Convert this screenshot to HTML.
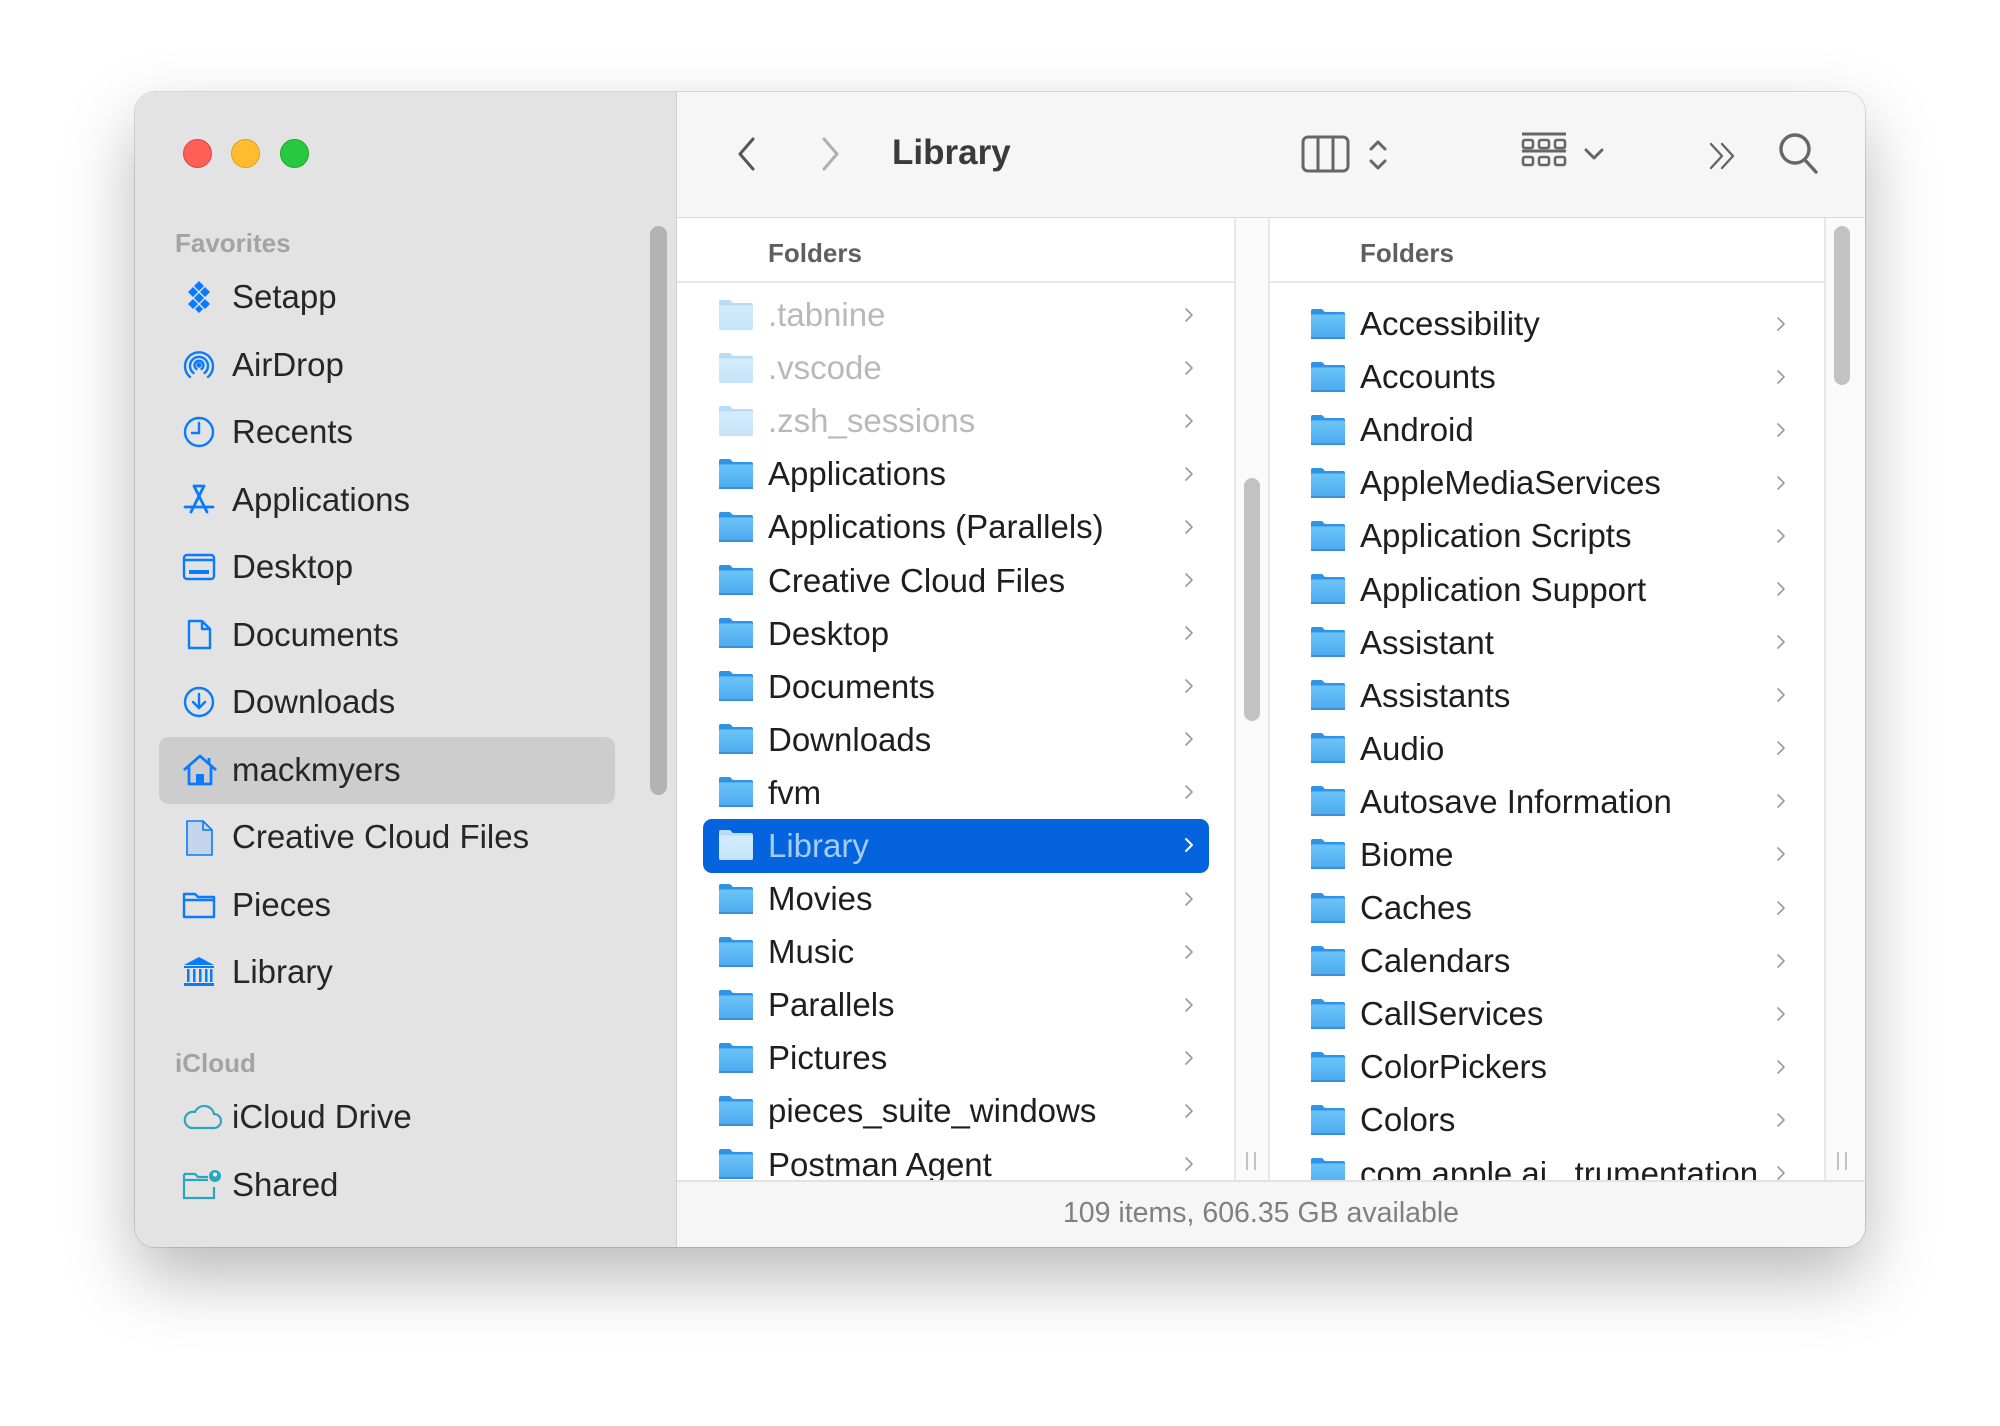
<!DOCTYPE html>
<html><head><meta charset="utf-8"><style>
*{margin:0;padding:0;box-sizing:border-box}
html,body{width:2000px;height:1426px;background:#fff;overflow:hidden;font-family:"Liberation Sans",sans-serif}
.win{position:absolute;left:135px;top:92px;width:1730px;height:1155px;border-radius:20px;overflow:hidden;background:#fff;box-shadow:0 30px 70px rgba(0,0,0,.28),0 0 0 1px rgba(0,0,0,.12)}
.side{position:absolute;left:0;top:0;width:542px;height:1155px;background:#e3e3e3;border-right:1px solid #d0d0d0}
.light{position:absolute;top:47px;width:29px;height:29px;border-radius:50%}
.sec{position:absolute;left:40px;font-size:26px;font-weight:bold;color:#a3a3a3}
.si{position:absolute;left:0;width:542px;height:68px;display:flex;align-items:center;font-size:33px;color:#262626}
.si svg{position:absolute;left:47px;top:17px}
.si span{position:absolute;left:97px}
.sel{position:absolute;left:24px;top:645px;width:456px;height:67px;background:#cdcdcd;border-radius:10px}
.sbar{position:absolute;left:515px;top:134px;width:17px;height:569px;border-radius:9px;background:#b3b3b3}
.tb{position:absolute;left:542px;top:0;width:1188px;height:126px;background:#f6f6f6;border-bottom:1px solid #dcdcdc}
.title{position:absolute;left:215px;top:41px;font-size:35px;font-weight:bold;color:#3a3a3a}
.col{position:absolute;top:126px;height:963px;overflow:hidden;background:#fff}
.hdr{height:65px;border-bottom:2px solid #e6e6e6;font-size:26px;font-weight:bold;color:#5f5f5f;padding-top:20px}
.row{height:53.1px;position:relative;display:flex;align-items:center;font-size:33px;color:#1e1e1e;white-space:nowrap}
.row svg.f{position:absolute;top:10px}
.row .ch{position:absolute;top:18px}
.fade{color:#b9b9b9}
.gap{position:absolute;top:126px;height:963px;background:#fafafa;border-left:2px solid #e8e8e8;border-right:2px solid #e8e8e8}
.thumb{position:absolute;width:16px;border-radius:8px;background:#c2c2c2}
.status{position:absolute;left:542px;top:1088px;width:1188px;height:67px;background:#f6f6f6;border-top:2px solid #e2e2e2;text-align:center;font-size:28.5px;color:#808080;padding-top:15px;padding-right:20px}
.grip{position:absolute;width:10px;height:18px;border-left:2px solid #c2c2c2;border-right:2px solid #c2c2c2}
</style></head><body>
<svg width="0" height="0" style="position:absolute">
<defs>
<linearGradient id="fg" x1="0" y1="0" x2="0" y2="1"><stop offset="0" stop-color="#6cc4f8"/><stop offset="1" stop-color="#4aa9ef"/></linearGradient>
<linearGradient id="fgl" x1="0" y1="0" x2="0" y2="1"><stop offset="0" stop-color="#d4ecfc"/><stop offset="1" stop-color="#c4e3fa"/></linearGradient>
<symbol id="fold" viewBox="0 0 36 32"><path d="M1 3q0-2 2-2h9l3 3h18q2 0 2 2v23q0 2-2 2H3q-2 0-2-2z" fill="#2f93e6"/><path d="M1 8q0-1.5 1.5-1.5h31q1.5 0 1.5 1.5v21q0 2-2 2H3q-2 0-2-2z" fill="url(#fg)"/><rect x="1" y="29" width="34" height="2" fill="#3a8fd6"/></symbol>
<symbol id="foldl" viewBox="0 0 36 32"><path d="M1 3q0-2 2-2h9l3 3h18q2 0 2 2v23q0 2-2 2H3q-2 0-2-2z" fill="#b8dcf7"/><path d="M1 8q0-1.5 1.5-1.5h31q1.5 0 1.5 1.5v21q0 2-2 2H3q-2 0-2-2z" fill="url(#fgl)"/></symbol>
<symbol id="chev" viewBox="0 0 10 16"><path d="M2 2l6 6-6 6" fill="none" stroke="#9a9a9a" stroke-width="1.6" stroke-linecap="round" stroke-linejoin="round"/></symbol>
<symbol id="chevw" viewBox="0 0 10 16"><path d="M2 2l6 6-6 6" fill="none" stroke="#fff" stroke-width="2" stroke-linecap="round" stroke-linejoin="round"/></symbol>
</defs></svg>
<div class="win">
 <div class="side">
  <div class="light" style="left:48px;background:#fe5f57;border:1px solid #e0443e"></div>
  <div class="light" style="left:96px;background:#febc2e;border:1px solid #dea123"></div>
  <div class="light" style="left:145px;background:#28c840;border:1px solid #1aab29"></div>
  <div class="sec" style="top:136px">Favorites</div>
  <div class="sel"></div>
  <div class="si" style="top:171px"><svg width="34" height="34" viewBox="0 0 34 34" fill="#0a7aff"><path d="M17 1l5 5-5 5-5-5z M11 7l5 5-5 5-5-5z M23 7l5 5-5 5-5-5z M17 13l5 5-5 5-5-5z M11 19l5 5-5 5-5-5z M23 19l5 5-5 5-5-5z M17 25l4 4-4 4-4-4z"/></svg><span>Setapp</span></div>
  <div class="si" style="top:239px"><svg width="34" height="34" viewBox="0 0 34 34" fill="none" stroke="#0a7aff" stroke-width="2.4" stroke-linecap="round"><path d="M8 29A14 14 0 1 1 26 29"/><path d="M11.5 25A9 9 0 1 1 22.5 25"/><path d="M14.5 21A4.5 4.5 0 1 1 19.5 21"/><circle cx="17" cy="17" r="1.5" fill="#0a7aff"/></svg><span>AirDrop</span></div>
  <div class="si" style="top:306px"><svg width="34" height="34" viewBox="0 0 34 34" fill="none" stroke="#0a7aff" stroke-width="2.4" stroke-linecap="round"><circle cx="17" cy="17" r="14"/><path d="M17 8v10h-7"/></svg><span>Recents</span></div>
  <div class="si" style="top:374px"><svg width="34" height="34" viewBox="0 0 34 34" fill="none" stroke="#0a7aff" stroke-width="2.8" stroke-linecap="round"><path d="M12 3l13 26M22 3L9 29M3 24h28M12 3h8"/></svg><span>Applications</span></div>
  <div class="si" style="top:441px"><svg width="34" height="34" viewBox="0 0 34 34" fill="none" stroke="#0a7aff" stroke-width="2.4"><rect x="2" y="5" width="30" height="24" rx="3"/><path d="M2 10h30"/><rect x="7" y="20" width="20" height="4" fill="#0a7aff" stroke="none"/></svg><span>Desktop</span></div>
  <div class="si" style="top:509px"><svg width="34" height="34" viewBox="0 0 34 34" fill="none" stroke="#0a7aff" stroke-width="2.4" stroke-linejoin="round"><path d="M7 3h13l8 8v19H7z M20 3v8h8"/></svg><span>Documents</span></div>
  <div class="si" style="top:576px"><svg width="34" height="34" viewBox="0 0 34 34" fill="none" stroke="#0a7aff" stroke-width="2.4" stroke-linecap="round"><circle cx="17" cy="17" r="14"/><path d="M17 9v14M11 17l6 6 6-6"/></svg><span>Downloads</span></div>
  <div class="si" style="top:644px"><svg width="36" height="34" viewBox="0 0 36 34" fill="none" stroke="#0a7aff" stroke-width="2.8" stroke-linejoin="round"><path d="M2 17L18 3l16 14M7 13v18h22V13"/><rect x="14" y="21" width="8" height="10" fill="#0a7aff" stroke="none"/><path d="M27 5v6"/></svg><span>mackmyers</span></div>
  <div class="si" style="top:711px"><svg width="34" height="36" viewBox="0 0 34 36" fill="#c5d6ec" stroke="#0a7aff" stroke-width="1.6" stroke-linejoin="round"><path d="M5 1h16l9 9v25H5z"/><path d="M21 1v9h9" fill="none"/></svg><span>Creative Cloud Files</span></div>
  <div class="si" style="top:779px"><svg width="34" height="34" viewBox="0 0 34 34" fill="none" stroke="#0a7aff" stroke-width="2.4" stroke-linejoin="round"><path d="M2 6h11l3 3h16v20H2z M2 12h30"/></svg><span>Pieces</span></div>
  <div class="si" style="top:846px"><svg width="34" height="34" viewBox="0 0 34 34" fill="#0a7aff"><path d="M17 2L2 10h30z"/><rect x="2" y="11" width="30" height="2"/><rect x="5" y="14" width="2.5" height="13"/><rect x="11" y="14" width="2.5" height="13"/><rect x="17" y="14" width="2.5" height="13"/><rect x="23" y="14" width="2.5" height="13"/><rect x="28" y="14" width="2.5" height="13"/><rect x="2" y="28" width="30" height="3"/></svg><span>Library</span></div>
  <div class="sec" style="top:956px">iCloud</div>
  <div class="si" style="top:991px"><svg width="40" height="34" viewBox="0 0 40 34" fill="none" stroke="#2aa6bf" stroke-width="2.2"><path d="M9 28h23a7 7 0 0 0 0-14 10 10 0 0 0-19-2 7 7 0 0 0-4 16z"/></svg><span>iCloud Drive</span></div>
  <div class="si" style="top:1059px"><svg width="40" height="34" viewBox="0 0 40 34" fill="none" stroke="#2aa6bf" stroke-width="2.2"><path d="M2 6h11l3 3h10M2 12h24M2 6v24h30V19"/><circle cx="33" cy="8" r="6" fill="#2aa6bf" stroke="none"/><circle cx="33" cy="6.5" r="2" fill="#fff" stroke="none"/></svg><span>Shared</span></div>
  <div class="sbar"></div>
 </div>
 <div class="tb">
  <svg style="position:absolute;left:58px;top:44px" width="22" height="36" viewBox="0 0 22 36"><path d="M18 3L5 18l13 15" fill="none" stroke="#555" stroke-width="3" stroke-linecap="round" stroke-linejoin="round"/></svg>
  <svg style="position:absolute;left:143px;top:44px" width="22" height="36" viewBox="0 0 22 36"><path d="M4 3l13 15L4 33" fill="none" stroke="#b0b0b0" stroke-width="3" stroke-linecap="round" stroke-linejoin="round"/></svg>
  <div class="title">Library</div>
  <svg style="position:absolute;left:624px;top:42px" width="50" height="40" viewBox="0 0 50 40" fill="none" stroke="#666" stroke-width="3"><rect x="2" y="3" width="45" height="34" rx="5"/><path d="M17 3v34M32 3v34"/></svg>
  <svg style="position:absolute;left:690px;top:46px" width="22" height="34" viewBox="0 0 22 34" fill="none" stroke="#666" stroke-width="3" stroke-linecap="round" stroke-linejoin="round"><path d="M4 11l7-7 7 7M4 23l7 7 7-7"/></svg>
  <svg style="position:absolute;left:844px;top:40px" width="46" height="44" viewBox="0 0 46 44" fill="none" stroke="#666" stroke-width="2.6"><path d="M1 2h44M1 19h44" stroke-width="3"/><rect x="2" y="8" width="10" height="8" rx="2"/><rect x="18" y="8" width="10" height="8" rx="2"/><rect x="34" y="8" width="10" height="8" rx="2"/><rect x="2" y="25" width="10" height="8" rx="2"/><rect x="18" y="25" width="10" height="8" rx="2"/><rect x="34" y="25" width="10" height="8" rx="2"/></svg>
  <svg style="position:absolute;left:906px;top:55px" width="22" height="16" viewBox="0 0 22 16"><path d="M3 3l8 8 8-8" fill="none" stroke="#666" stroke-width="3" stroke-linecap="round" stroke-linejoin="round"/></svg>
  <svg style="position:absolute;left:1031px;top:49px" width="32" height="30" viewBox="0 0 32 30" fill="none" stroke="#666" stroke-width="2.4" stroke-linecap="round" stroke-linejoin="round"><path d="M3 3l11 12L3 27M14 3l11 12-11 12"/></svg>
  <svg style="position:absolute;left:1101px;top:40px" width="44" height="44" viewBox="0 0 44 44" fill="none" stroke="#666" stroke-width="3.4" stroke-linecap="round"><circle cx="17" cy="17" r="14"/><path d="M27 28l11 12"/></svg>
 </div>
 <!-- column 1 -->
 <div class="col" style="left:542px;width:557px">
  <div class="hdr" style="padding-left:91px">Folders</div>
  <div style="padding-top:5.5px">
   <div class="row fade"><svg class="f" style="left:41px" width="36" height="32"><use href="#foldl"/></svg><span style="margin-left:91px">.tabnine</span><svg class="ch" style="left:507px" width="10" height="16"><use href="#chev"/></svg></div>
   <div class="row fade"><svg class="f" style="left:41px" width="36" height="32"><use href="#foldl"/></svg><span style="margin-left:91px">.vscode</span><svg class="ch" style="left:507px" width="10" height="16"><use href="#chev"/></svg></div>
   <div class="row fade"><svg class="f" style="left:41px" width="36" height="32"><use href="#foldl"/></svg><span style="margin-left:91px">.zsh_sessions</span><svg class="ch" style="left:507px" width="10" height="16"><use href="#chev"/></svg></div>
   <div class="row"><svg class="f" style="left:41px" width="36" height="32"><use href="#fold"/></svg><span style="margin-left:91px">Applications</span><svg class="ch" style="left:507px" width="10" height="16"><use href="#chev"/></svg></div>
   <div class="row"><svg class="f" style="left:41px" width="36" height="32"><use href="#fold"/></svg><span style="margin-left:91px">Applications (Parallels)</span><svg class="ch" style="left:507px" width="10" height="16"><use href="#chev"/></svg></div>
   <div class="row"><svg class="f" style="left:41px" width="36" height="32"><use href="#fold"/></svg><span style="margin-left:91px">Creative Cloud Files</span><svg class="ch" style="left:507px" width="10" height="16"><use href="#chev"/></svg></div>
   <div class="row"><svg class="f" style="left:41px" width="36" height="32"><use href="#fold"/></svg><span style="margin-left:91px">Desktop</span><svg class="ch" style="left:507px" width="10" height="16"><use href="#chev"/></svg></div>
   <div class="row"><svg class="f" style="left:41px" width="36" height="32"><use href="#fold"/></svg><span style="margin-left:91px">Documents</span><svg class="ch" style="left:507px" width="10" height="16"><use href="#chev"/></svg></div>
   <div class="row"><svg class="f" style="left:41px" width="36" height="32"><use href="#fold"/></svg><span style="margin-left:91px">Downloads</span><svg class="ch" style="left:507px" width="10" height="16"><use href="#chev"/></svg></div>
   <div class="row"><svg class="f" style="left:41px" width="36" height="32"><use href="#fold"/></svg><span style="margin-left:91px">fvm</span><svg class="ch" style="left:507px" width="10" height="16"><use href="#chev"/></svg></div>
   <div class="row" style="color:#a4cdf5"><div style="position:absolute;left:26px;top:0;width:506px;height:54px;background:#0563dd;border-radius:9px"></div><svg class="f" style="left:41px" width="36" height="32"><use href="#foldl"/></svg><span style="margin-left:91px;position:relative">Library</span><svg class="ch" style="left:507px" width="10" height="16"><use href="#chevw"/></svg></div>
   <div class="row"><svg class="f" style="left:41px" width="36" height="32"><use href="#fold"/></svg><span style="margin-left:91px">Movies</span><svg class="ch" style="left:507px" width="10" height="16"><use href="#chev"/></svg></div>
   <div class="row"><svg class="f" style="left:41px" width="36" height="32"><use href="#fold"/></svg><span style="margin-left:91px">Music</span><svg class="ch" style="left:507px" width="10" height="16"><use href="#chev"/></svg></div>
   <div class="row"><svg class="f" style="left:41px" width="36" height="32"><use href="#fold"/></svg><span style="margin-left:91px">Parallels</span><svg class="ch" style="left:507px" width="10" height="16"><use href="#chev"/></svg></div>
   <div class="row"><svg class="f" style="left:41px" width="36" height="32"><use href="#fold"/></svg><span style="margin-left:91px">Pictures</span><svg class="ch" style="left:507px" width="10" height="16"><use href="#chev"/></svg></div>
   <div class="row"><svg class="f" style="left:41px" width="36" height="32"><use href="#fold"/></svg><span style="margin-left:91px">pieces_suite_windows</span><svg class="ch" style="left:507px" width="10" height="16"><use href="#chev"/></svg></div>
   <div class="row"><svg class="f" style="left:41px" width="36" height="32"><use href="#fold"/></svg><span style="margin-left:91px">Postman Agent</span><svg class="ch" style="left:507px" width="10" height="16"><use href="#chev"/></svg></div>
  </div>
 </div>
 <div class="gap" style="left:1099px;width:36px"></div>
 <div class="thumb" style="left:1109px;top:386px;height:243px"></div>
 <div class="grip" style="left:1111px;top:1060px"></div>
 <!-- column 2 -->
 <div class="col" style="left:1135px;width:555px">
  <div class="hdr" style="padding-left:90px">Folders</div>
  <div style="padding-top:14.5px">
   <div class="row"><svg class="f" style="left:40px" width="36" height="32"><use href="#fold"/></svg><span style="margin-left:90px">Accessibility</span><svg class="ch" style="left:506px" width="10" height="16"><use href="#chev"/></svg></div>
   <div class="row"><svg class="f" style="left:40px" width="36" height="32"><use href="#fold"/></svg><span style="margin-left:90px">Accounts</span><svg class="ch" style="left:506px" width="10" height="16"><use href="#chev"/></svg></div>
   <div class="row"><svg class="f" style="left:40px" width="36" height="32"><use href="#fold"/></svg><span style="margin-left:90px">Android</span><svg class="ch" style="left:506px" width="10" height="16"><use href="#chev"/></svg></div>
   <div class="row"><svg class="f" style="left:40px" width="36" height="32"><use href="#fold"/></svg><span style="margin-left:90px">AppleMediaServices</span><svg class="ch" style="left:506px" width="10" height="16"><use href="#chev"/></svg></div>
   <div class="row"><svg class="f" style="left:40px" width="36" height="32"><use href="#fold"/></svg><span style="margin-left:90px">Application Scripts</span><svg class="ch" style="left:506px" width="10" height="16"><use href="#chev"/></svg></div>
   <div class="row"><svg class="f" style="left:40px" width="36" height="32"><use href="#fold"/></svg><span style="margin-left:90px">Application Support</span><svg class="ch" style="left:506px" width="10" height="16"><use href="#chev"/></svg></div>
   <div class="row"><svg class="f" style="left:40px" width="36" height="32"><use href="#fold"/></svg><span style="margin-left:90px">Assistant</span><svg class="ch" style="left:506px" width="10" height="16"><use href="#chev"/></svg></div>
   <div class="row"><svg class="f" style="left:40px" width="36" height="32"><use href="#fold"/></svg><span style="margin-left:90px">Assistants</span><svg class="ch" style="left:506px" width="10" height="16"><use href="#chev"/></svg></div>
   <div class="row"><svg class="f" style="left:40px" width="36" height="32"><use href="#fold"/></svg><span style="margin-left:90px">Audio</span><svg class="ch" style="left:506px" width="10" height="16"><use href="#chev"/></svg></div>
   <div class="row"><svg class="f" style="left:40px" width="36" height="32"><use href="#fold"/></svg><span style="margin-left:90px">Autosave Information</span><svg class="ch" style="left:506px" width="10" height="16"><use href="#chev"/></svg></div>
   <div class="row"><svg class="f" style="left:40px" width="36" height="32"><use href="#fold"/></svg><span style="margin-left:90px">Biome</span><svg class="ch" style="left:506px" width="10" height="16"><use href="#chev"/></svg></div>
   <div class="row"><svg class="f" style="left:40px" width="36" height="32"><use href="#fold"/></svg><span style="margin-left:90px">Caches</span><svg class="ch" style="left:506px" width="10" height="16"><use href="#chev"/></svg></div>
   <div class="row"><svg class="f" style="left:40px" width="36" height="32"><use href="#fold"/></svg><span style="margin-left:90px">Calendars</span><svg class="ch" style="left:506px" width="10" height="16"><use href="#chev"/></svg></div>
   <div class="row"><svg class="f" style="left:40px" width="36" height="32"><use href="#fold"/></svg><span style="margin-left:90px">CallServices</span><svg class="ch" style="left:506px" width="10" height="16"><use href="#chev"/></svg></div>
   <div class="row"><svg class="f" style="left:40px" width="36" height="32"><use href="#fold"/></svg><span style="margin-left:90px">ColorPickers</span><svg class="ch" style="left:506px" width="10" height="16"><use href="#chev"/></svg></div>
   <div class="row"><svg class="f" style="left:40px" width="36" height="32"><use href="#fold"/></svg><span style="margin-left:90px">Colors</span><svg class="ch" style="left:506px" width="10" height="16"><use href="#chev"/></svg></div>
   <div class="row"><svg class="f" style="left:40px" width="36" height="32"><use href="#fold"/></svg><span style="margin-left:90px">com.apple.ai...trumentation</span><svg class="ch" style="left:506px" width="10" height="16"><use href="#chev"/></svg></div>
  </div>
 </div>
 <div class="gap" style="left:1689px;width:41px;border-right:none"></div>
 <div class="thumb" style="left:1699px;top:134px;height:159px"></div>
 <div class="grip" style="left:1702px;top:1060px"></div>
 <div class="status">109 items, 606.35 GB available</div>
</div>
</body></html>
